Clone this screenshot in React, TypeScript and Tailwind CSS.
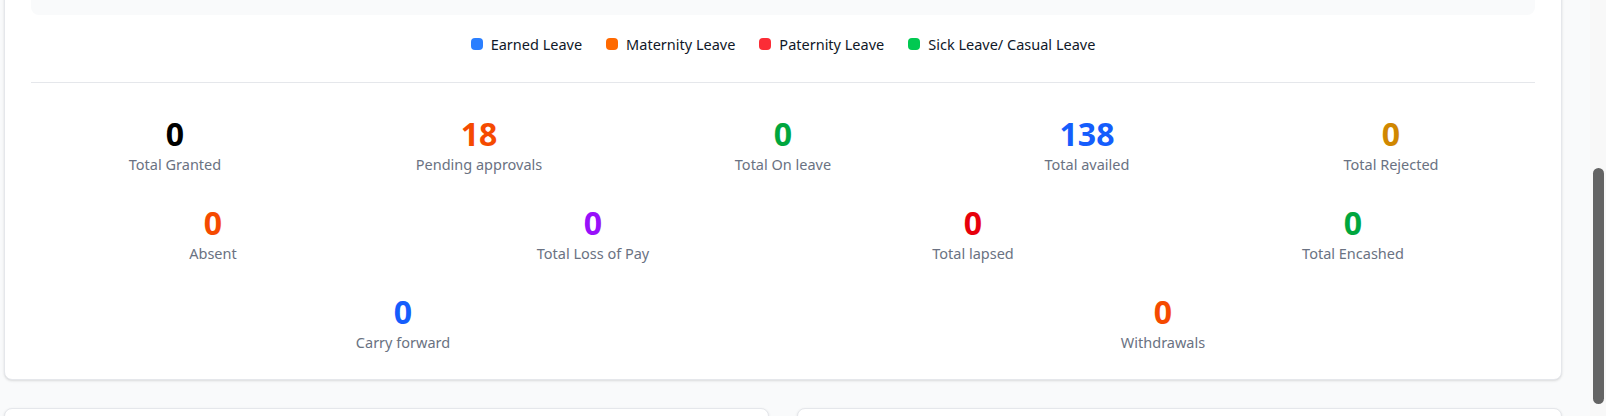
import React from "react";

type Stat = { value: string | number; label: string; color: string };

const legend = [
  { label: "Earned Leave", dot: "bg-blue-500" },
  { label: "Maternity Leave", dot: "bg-orange-500" },
  { label: "Paternity Leave", dot: "bg-red-500" },
  { label: "Sick Leave/ Casual Leave", dot: "bg-green-500" },
];

const rowOne: Stat[] = [
  { value: 0, label: "Total Granted", color: "text-black" },
  { value: 18, label: "Pending approvals", color: "text-orange-600" },
  { value: 0, label: "Total On leave", color: "text-green-600" },
  { value: 138, label: "Total availed", color: "text-blue-600" },
  { value: 0, label: "Total Rejected", color: "text-yellow-600" },
];

const rowTwo: Stat[] = [
  { value: 0, label: "Absent", color: "text-orange-600" },
  { value: 0, label: "Total Loss of Pay", color: "text-purple-600" },
  { value: 0, label: "Total lapsed", color: "text-red-600" },
  { value: 0, label: "Total Encashed", color: "text-green-600" },
];

const rowThree: Stat[] = [
  { value: 0, label: "Carry forward", color: "text-blue-600" },
  { value: 0, label: "Withdrawals", color: "text-orange-600" },
];

function StatItem({ stat }: { stat: Stat }) {
  return (
    <div className="flex flex-col items-center">
      <span className={`text-[32px] leading-9 font-bold ${stat.color}`}>
        {stat.value}
      </span>
      <span className="mt-[2px] text-[14.5px] leading-5 text-gray-500">
        {stat.label}
      </span>
    </div>
  );
}

export default function App() {
  return (
    <div className="flex w-[1606px] h-[416px] overflow-hidden bg-gray-50 font-['Noto_Sans',sans-serif]">
      <div className="flex-1 flex flex-col pl-1 pr-7 -mt-[30px]">
        <div className="bg-white border border-gray-200 rounded-lg shadow-sm px-[26px] pt-4 pb-[27px]">
          <div className="h-7 bg-gray-50 rounded-lg" />

          <div className="mt-[19px] flex items-center justify-center gap-6">
            {legend.map((item) => (
              <div key={item.label} className="flex items-center gap-2">
                <span className={`w-3 h-3 rounded-[4px] ${item.dot}`} />
                <span className="text-[14.5px] leading-5 text-gray-900">
                  {item.label}
                </span>
              </div>
            ))}
          </div>

          <div className="mt-[28px] border-t border-gray-200" />

          <div className="pt-[33px] flex flex-col gap-[31px]">
            <div className="grid grid-cols-5 gap-4">
              {rowOne.map((s) => (
                <StatItem key={s.label} stat={s} />
              ))}
            </div>
            <div className="grid grid-cols-4 gap-4">
              {rowTwo.map((s) => (
                <StatItem key={s.label} stat={s} />
              ))}
            </div>
            <div className="grid grid-cols-2 gap-4">
              {rowThree.map((s) => (
                <StatItem key={s.label} stat={s} />
              ))}
            </div>
          </div>
        </div>

        <div className="mt-7 grid grid-cols-2 gap-7">
          <div className="h-48 bg-white border border-gray-200 rounded-lg shadow-sm" />
          <div className="h-48 bg-white border border-gray-200 rounded-lg shadow-sm" />
        </div>
      </div>

      {/* scrollbar */}
      <div className="w-4 bg-[#f8f8f8] flex justify-center">
        <div className="mt-[168px] w-[11px] h-[236px] rounded-full bg-[#646464]" />
      </div>
    </div>
  );
}
